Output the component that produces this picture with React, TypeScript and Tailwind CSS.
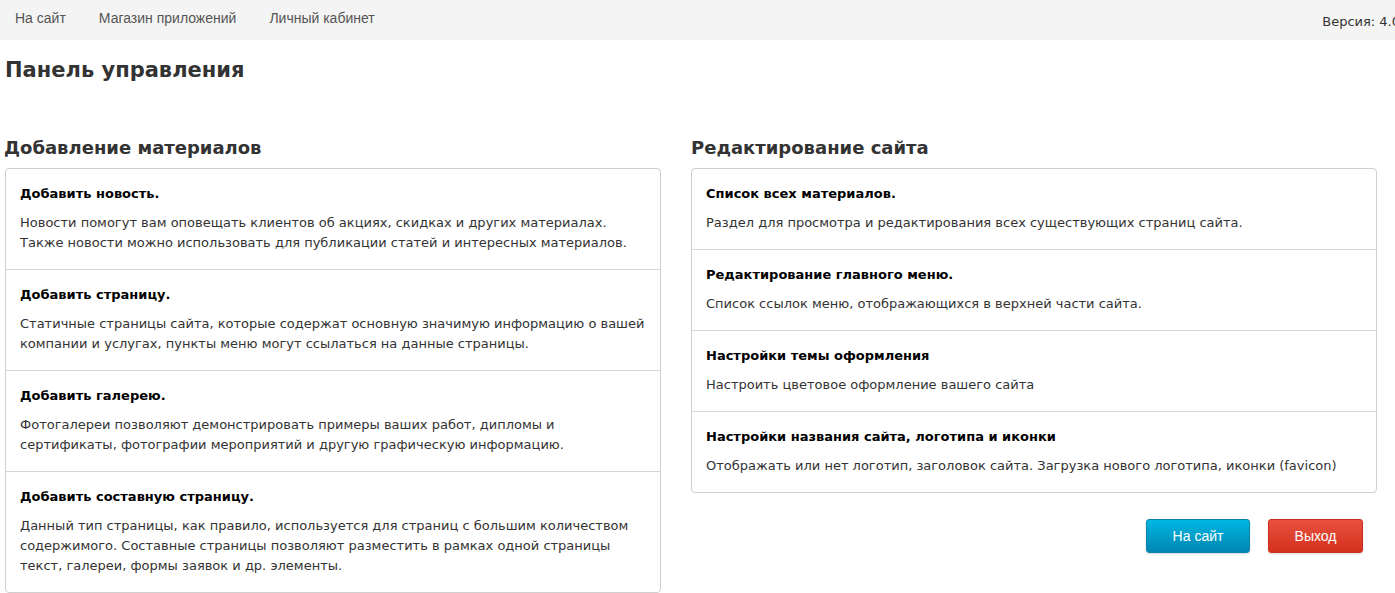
import React from "react";

const left = [
  {
    t: "Добавить новость.",
    d: [
      "Новости помогут вам оповещать клиентов об акциях, скидках и других материалах.",
      "Также новости можно использовать для публикации статей и интересных материалов.",
    ],
  },
  {
    t: "Добавить страницу.",
    d: [
      "Статичные страницы сайта, которые содержат основную значимую информацию о вашей",
      "компании и услугах, пункты меню могут ссылаться на данные страницы.",
    ],
  },
  {
    t: "Добавить галерею.",
    d: [
      "Фотогалереи позволяют демонстрировать примеры ваших работ, дипломы и",
      "сертификаты, фотографии мероприятий и другую графическую информацию.",
    ],
  },
  {
    t: "Добавить составную страницу.",
    d: [
      "Данный тип страницы, как правило, используется для страниц с большим количеством",
      "содержимого. Составные страницы позволяют разместить в рамках одной страницы",
      "текст, галереи, формы заявок и др. элементы.",
    ],
  },
];

const right = [
  {
    t: "Список всех материалов.",
    d: ["Раздел для просмотра и редактирования всех существующих страниц сайта."],
  },
  {
    t: "Редактирование главного меню.",
    d: ["Список ссылок меню, отображающихся в верхней части сайта."],
  },
  {
    t: "Настройки темы оформления",
    d: ["Настроить цветовое оформление вашего сайта"],
  },
  {
    t: "Настройки названия сайта, логотипа и иконки",
    d: ["Отображать или нет логотип, заголовок сайта. Загрузка нового логотипа, иконки (favicon)"],
  },
];

function Card({ items }: { items: { t: string; d: string[] }[] }) {
  return (
    <div className="border border-[#cfcfcf] rounded-[4px] bg-white">
      {items.map((it, i) => (
        <div
          key={i}
          className={
            "pl-[14px] pr-[14px] pt-[15px] pb-[16px] " +
            (i > 0 ? "border-t border-[#d6d6d6]" : "")
          }
        >
          <div className="text-[13px] leading-[20px] font-bold text-black mb-[9px]">{it.t}</div>
          <div className="text-[13px] leading-[20px] text-[#333]">
            {it.d.map((l, j) => (
              <div key={j} className="whitespace-nowrap">
                {l}
              </div>
            ))}
          </div>
        </div>
      ))}
    </div>
  );
}

export default function App() {
  return (
    <div
      className="w-[1395px] h-[593px] overflow-hidden bg-white"
      style={{ fontFamily: "'DejaVu Sans', sans-serif" }}
    >
      <div className="h-[40px] bg-[#f4f4f4] flex items-center">
        <div
          className="flex items-center text-[14px] text-[#555] pl-[15px] -mt-[3px]"
          style={{ fontFamily: "'Liberation Sans', Arial, sans-serif" }}
        >
          <span>На сайт</span>
          <span className="ml-[33px]">Магазин приложений</span>
          <span className="ml-[33px]">Личный кабинет</span>
        </div>
        <div className="ml-auto mr-[-5px] text-[13px] text-[#333] whitespace-nowrap shrink-0 mt-[3px]">
          Версия: 4.0
        </div>
      </div>

      <div className="pl-[5px]">
        <h1 className="text-[21px] leading-[24px] font-bold text-[#333] mt-[18px]">
          Панель управления
        </h1>

        <div className="grid grid-cols-[656px_686px] gap-x-[30px] mt-[55px]">
          <div>
            <h2 className="text-[18px] leading-[22px] font-bold text-[#333] mb-[9px] -ml-[1px]">
              Добавление материалов
            </h2>
            <Card items={left} />
          </div>
          <div>
            <h2 className="text-[18px] leading-[22px] font-bold text-[#333] mb-[9px]">
              Редактирование сайта
            </h2>
            <Card items={right} />
            <div
              className="flex justify-end gap-[18px] mt-[26px] mr-[14px] text-[14px]"
              style={{ fontFamily: "'Liberation Sans', Arial, sans-serif" }}
            >
              <button className="w-[104px] h-[34px] rounded-[3px] text-white bg-gradient-to-b from-[#00b6e3] to-[#0087b1] border border-[#0a85aa] shadow-[0_1px_2px_rgba(0,0,0,0.15)]">
                На сайт
              </button>
              <button className="w-[95px] h-[34px] rounded-[3px] text-white bg-gradient-to-b from-[#e8503f] to-[#d3301b] border border-[#c9301f] shadow-[0_1px_2px_rgba(0,0,0,0.15)]">
                Выход
              </button>
            </div>
          </div>
        </div>
      </div>
    </div>
  );
}
